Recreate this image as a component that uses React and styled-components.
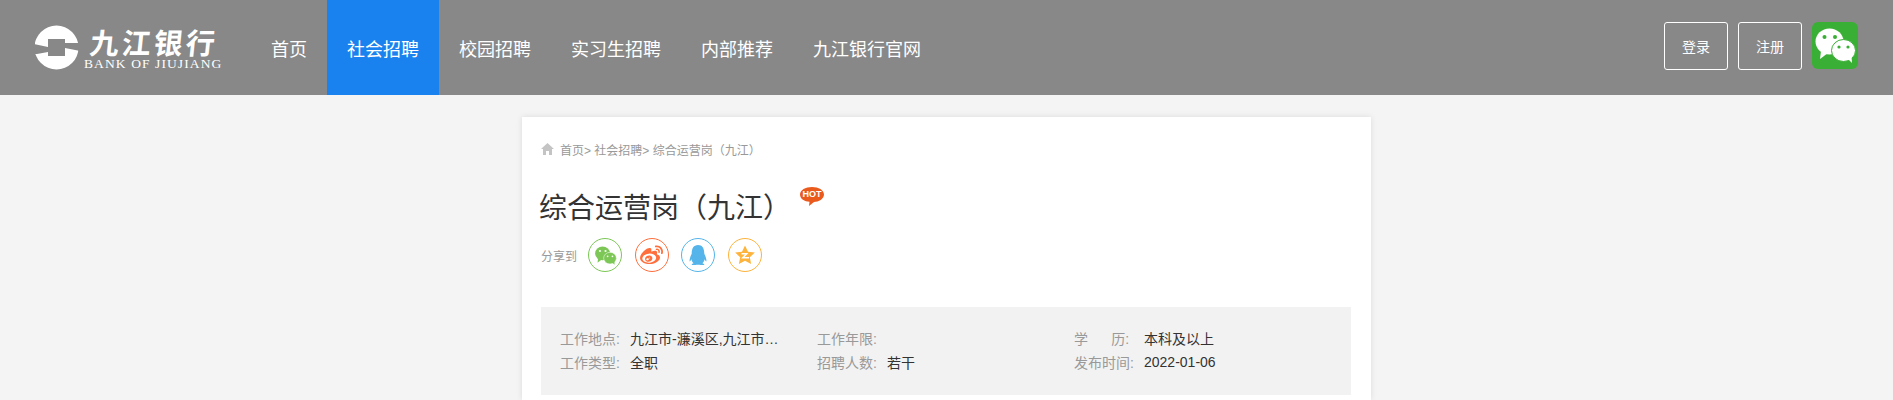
import React from 'react';
import styled, { createGlobalStyle } from 'styled-components';
import { FaQq, FaWeibo } from 'react-icons/fa';

const GlobalStyle = createGlobalStyle`
  html, body {
    margin: 0;
    padding: 0;
    height: 400px;
    overflow: hidden;
    background: #f4f4f4;
    font-family: "Liberation Sans", "Noto Sans CJK SC", sans-serif;
  }
`;

const Header = styled.header`
  display: flex;
  align-items: stretch;
  height: 95px;
  background: #888888;
  padding: 0 35px;
`;

const Logo = styled.div`
  display: flex;
  align-items: center;
  gap: 5px;
  width: 216px;
`;

const LogoText = styled.div`
  display: flex;
  flex-direction: column;
`;

const LogoName = styled.span`
  padding-left: 6px;
  font-family: "Noto Sans CJK SC", sans-serif;
  font-size: 29px;
  font-weight: 700;
  line-height: 32px;
  letter-spacing: 3px;
  color: #fff;
  white-space: nowrap;
  transform: skewX(-6deg);
`;

const LogoEnglish = styled.span`
  font-family: "Liberation Serif", serif;
  font-size: 13.5px;
  line-height: 14px;
  letter-spacing: 1.1px;
  color: #fff;
  white-space: nowrap;
`;

const Nav = styled.nav`
  display: flex;
  flex: 1;
`;

const NavItem = styled.a`
  display: flex;
  align-items: center;
  padding: 0 20px;
  font-size: 18px;
  color: #fff;
  background: ${props => (props.$active ? '#1a82ee' : 'transparent')};
`;

const Actions = styled.div`
  display: flex;
  align-items: flex-start;
  gap: 10px;
  padding-top: 22px;
`;

const AuthButton = styled.a`
  display: flex;
  align-items: center;
  justify-content: center;
  box-sizing: border-box;
  width: 64px;
  height: 48px;
  border: 1px solid #fff;
  border-radius: 3px;
  font-size: 14px;
  color: #fff;
`;

const WechatTile = styled.div`
  width: 46px;
  height: 47px;
  border-radius: 6px;
  background: #3aaf35;
`;

const Card = styled.main`
  box-sizing: border-box;
  width: 849px;
  height: 283px;
  margin: 22px auto 0;
  padding: 23px 20px 0 19px;
  background: #fff;
  box-shadow: 0 0 6px rgba(0, 0, 0, 0.1);
`;

const Crumbs = styled.div`
  display: flex;
  align-items: center;
  gap: 6px;
  height: 18px;
  font-size: 12px;
  color: #999;
`;

const TitleRow = styled.div`
  display: flex;
  align-items: flex-start;
  margin-top: 29px;
`;

const Title = styled.h1`
  margin: 0 0 0 -2px;
  font-size: 28px;
  font-weight: 400;
  line-height: 44px;
  color: #333;
`;

const HotBadge = styled.div`
  position: relative;
  margin: 0 0 0 9px;
`;

const HotLabel = styled.span`
  position: absolute;
  top: 2px;
  left: 0;
  width: 24px;
  text-align: center;
  font-size: 9px;
  font-weight: 700;
  line-height: 11px;
  color: #fff;
`;

const ShareRow = styled.div`
  display: flex;
  align-items: center;
  margin-top: 7px;
`;

const ShareLabel = styled.span`
  width: 47px;
  font-size: 12px;
  color: #999;
`;

const ShareIcons = styled.div`
  display: flex;
  gap: 12.6px;
`;

const ShareCircle = styled.a`
  display: flex;
  align-items: center;
  justify-content: center;
  box-sizing: border-box;
  width: 34px;
  height: 34px;
  border: 1px solid ${props => props.$color};
  border-radius: 50%;
  color: ${props => props.$color};
`;

const InfoPanel = styled.section`
  display: grid;
  grid-template-columns: repeat(3, 257px);
  grid-auto-rows: 24px;
  align-content: center;
  box-sizing: border-box;
  height: 88px;
  margin-top: 35px;
  padding: 0 19px 2px;
  background: #f2f2f2;
`;

const InfoItem = styled.div`
  display: flex;
  align-items: center;
  font-size: 14px;
`;

const InfoLabel = styled.span`
  flex: none;
  width: 70px;
  color: #999;
  white-space: pre;
`;

const InfoValue = styled.span`
  max-width: 150px;
  overflow: hidden;
  text-overflow: ellipsis;
  white-space: nowrap;
  color: #333;
`;

const BankMark = () => (
  <svg width="44" height="46" viewBox="0 0 44 46">
    <circle cx="21.500" cy="22.500" r="22" fill="#fff" />
    <path d="M-1 19 L13 22 V27 L2 29 L-1 29Z" fill="#888" />
    <path d="M30 18 H45 V26 L30 23Z" fill="#888" />
    <path d="M13 14 H30 V31 H13Z" fill="#888" />
  </svg>
);

const WechatBubbles = ({ bubble, detail }) => (
  <svg width="100%" height="100%" viewBox="0 0 46 47">
    <ellipse cx="17.500" cy="19.500" rx="14" ry="13" fill={bubble} />
    <path d="M9 29 L8 37 L16 31Z" fill={bubble} />
    <ellipse cx="31.500" cy="28.500" rx="12" ry="11" fill={bubble} stroke={detail} strokeWidth="1" />
    <path d="M36 37 L40 41 L39.500 34Z" fill={bubble} />
    <circle cx="12.500" cy="15" r="2" fill={detail} />
    <circle cx="23" cy="15" r="2" fill={detail} />
    <circle cx="27" cy="25" r="1.600" fill={detail} />
    <circle cx="36" cy="25" r="1.600" fill={detail} />
  </svg>
);

const ShareWechat = styled.span`
  width: 25px;
  height: 25px;
`;

const HomeIcon = () => (
  <svg width="13" height="12" viewBox="0 0 13 12">
    <path d="M6.500 0 L13 6 H11 V12 H8 V8 H5 V12 H2 V6 H0Z" fill="#c4c4c4" />
  </svg>
);

const HotBubble = () => (
  <svg width="24" height="19" viewBox="0 0 24 19">
    <path d="M12 0c6.600 0 12 3 12 7.500S18.600 15 14 15l-5 4 .5-4.200C4.500 14.500 0 12 0 7.500S5.400 0 12 0z" fill="#ea5a1d" />
  </svg>
);

const QzoneIcon = () => (
  <svg width="20" height="20" viewBox="0 0 20 20">
    <path d="M10 0.500l3 6.300 6.800.8-5 4.700 1.300 6.800-6.100-3.400-6.100 3.400 1.300-6.800-5-4.700 6.800-.8z" fill="#fdb33c" />
    <path d="M6.500 8h7l-4 4h4.500v1.500H6l4-4H6.500z" fill="#fff" />
  </svg>
);

const navItems = ['首页', '社会招聘', '校园招聘', '实习生招聘', '内部推荐', '九江银行官网'];

const info = [
  ['工作地点:', '九江市-濂溪区,九江市-浔阳区'],
  ['工作年限:', ''],
  ['学      历:', '本科及以上'],
  ['工作类型:', '全职'],
  ['招聘人数:', '若干'],
  ['发布时间:', '2022-01-06'],
];

export default function App() {
  return (
    <>
      <GlobalStyle />
      <Header>
        <Logo>
          <BankMark />
          <LogoText>
            <LogoName>九江银行</LogoName>
            <LogoEnglish>BANK OF JIUJIANG</LogoEnglish>
          </LogoText>
        </Logo>
        <Nav>
          {navItems.map(item => (
            <NavItem key={item} $active={item === '社会招聘'}>
              {item}
            </NavItem>
          ))}
        </Nav>
        <Actions>
          <AuthButton>登录</AuthButton>
          <AuthButton>注册</AuthButton>
          <WechatTile>
            <WechatBubbles bubble="#fff" detail="#3aaf35" />
          </WechatTile>
        </Actions>
      </Header>
      <Card>
        <Crumbs>
          <HomeIcon />
          <span>首页&gt; 社会招聘&gt; 综合运营岗（九江）</span>
        </Crumbs>
        <TitleRow>
          <Title>综合运营岗（九江）</Title>
          <HotBadge>
            <HotBubble />
            <HotLabel>HOT</HotLabel>
          </HotBadge>
        </TitleRow>
        <ShareRow>
          <ShareLabel>分享到</ShareLabel>
          <ShareIcons>
            <ShareCircle $color="#7cc756">
              <ShareWechat>
                <WechatBubbles bubble="#7cc756" detail="#fff" />
              </ShareWechat>
            </ShareCircle>
            <ShareCircle $color="#ff6f3d">
              <FaWeibo size={23} />
            </ShareCircle>
            <ShareCircle $color="#55b5ea">
              <FaQq size={20} />
            </ShareCircle>
            <ShareCircle $color="#fdb33c">
              <QzoneIcon />
            </ShareCircle>
          </ShareIcons>
        </ShareRow>
        <InfoPanel>
          {info.map(([label, value]) => (
            <InfoItem key={label}>
              <InfoLabel>{label}</InfoLabel>
              <InfoValue>{value}</InfoValue>
            </InfoItem>
          ))}
        </InfoPanel>
      </Card>
    </>
  );
}
